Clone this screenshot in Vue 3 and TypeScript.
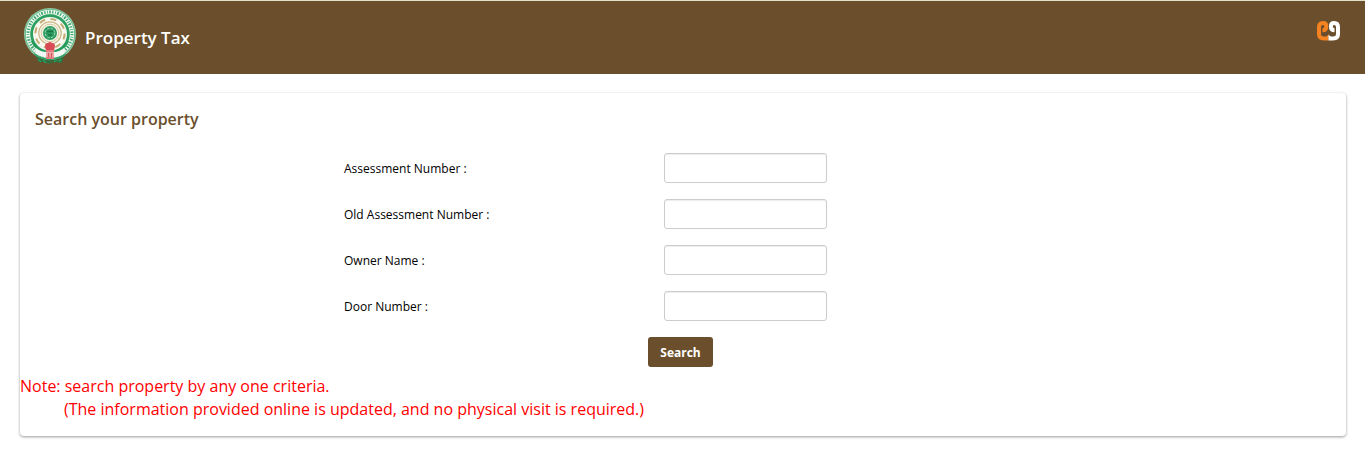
<script setup lang="ts">
import { reactive } from 'vue'

interface Field {
  id: string
  label: string
}

const fields: Field[] = [
  { id: 'assessmentNumber', label: 'Assessment Number :' },
  { id: 'oldAssessmentNumber', label: 'Old Assessment Number :' },
  { id: 'ownerName', label: 'Owner Name :' },
  { id: 'doorNumber', label: 'Door Number :' },
]

const form = reactive<Record<string, string>>({
  assessmentNumber: '',
  oldAssessmentNumber: '',
  ownerName: '',
  doorNumber: '',
})
</script>

<template>
  <div class="page">
    <header class="bar">
      <svg class="emblem" viewBox="0 0 52 56" aria-hidden="true">
        <path d="M12 49 L15 54 L20 54 L25 56 L30 54 L38 55 L40 49 Z" fill="#3a6a3c" />
        <path d="M14 51 l3 3 M19 52 l3 3 M30 54 l3 -2 M35 54 l2 -3" stroke="#1fa163" stroke-width="1.4" />
        <circle cx="26" cy="26" r="26" fill="#8fcaa6" />
        <circle cx="26" cy="26" r="24.8" fill="#4bb07a" />
        <circle cx="26" cy="26" r="22" fill="none" stroke="#eef7f0" stroke-width="4.4" />
        <circle cx="26" cy="26" r="22" fill="none" stroke="#3aa56b" stroke-width="3" stroke-dasharray="1.2 1.7 0.8 1.3 1.6 1.5" />
        <circle cx="26" cy="26" r="18.2" fill="#f3f6ec" stroke="#2b9f60" stroke-width="2.4" />
        <circle cx="26" cy="25.5" r="14.6" fill="#fbfaf2" stroke="#c2ab74" stroke-width="2" stroke-dasharray="6 5.47" />
        <circle cx="26" cy="25" r="11.2" fill="#f6f4e6" stroke="#c9b788" stroke-width="1.2" />
        <circle cx="26" cy="25" r="8.8" fill="none" stroke="#d6c9a0" stroke-width="1" />
        <circle cx="26" cy="25" r="7" fill="#2d9c62" />
        <circle cx="26" cy="25" r="4.8" fill="none" stroke="#a5d6b8" stroke-width="1" stroke-dasharray="2.4 1.4" />
        <path d="M23 23.5 h6 M24 27 h4" stroke="#177443" stroke-width="1.6" />
        <path d="M8 33 Q12 42 21 43 M44 33 Q40 42 31 43" fill="none" stroke="#249a5b" stroke-width="2.2" />
        <path d="M12 40 Q17 44 22 44 L22 49 Q16 49 11 45 Z M40 40 Q35 44 30 44 L30 49 Q36 49 41 45 Z" fill="#f2f8f3" />
        <path d="M10 46 Q17 51 25 51.5 Q35 51 42 46" fill="none" stroke="#2b9f60" stroke-width="1.4" />
        <path d="M21 38 Q21 35 24 35 Q26 33 28 35 Q31 35 31 38 L30 43 L22 43 Z" fill="#d84b55" />
        <path d="M22 42 h8 v9 h-8 Z" fill="#eda9a8" />
        <path d="M22 43 h8 M24.5 45 v4 M27.5 45 v4 M22 50 h8" stroke="#d8505a" stroke-width="1.2" />
      </svg>
      <h1 class="title">Property Tax</h1>
      <svg class="brand" viewBox="0 0 25 22" aria-label="eg" role="img">
        <g fill="none" stroke-width="4">
          <path d="M12.5 18.5 H8 Q3 18.5 3 14 V7 Q3 3 7 3 Q10.3 3 10.3 6.4 Q10.3 10.2 6.5 10.2" stroke="#f58220" />
          <path d="M12.5 18.5 H17 Q22 18.5 22 14 V7 Q22 3 18.2 3 Q14.9 3 14.9 6.4 Q14.9 10.2 18.5 10.2" stroke="#fff" />
        </g>
        <path d="M12.5 14.5 L10 17 H12.5 Z" fill="#f58220" />
        <path d="M12.5 14.5 L15 17 H12.5 Z" fill="#fff" />
      </svg>
    </header>

    <main class="card">
      <h2 class="heading">Search your property</h2>
      <form @submit.prevent>
        <div v-for="field in fields" :key="field.id" class="row">
          <label :for="field.id">{{ field.label }}</label>
          <input :id="field.id" v-model="form[field.id]" type="text" />
        </div>
        <div class="actions">
          <button type="submit">Search</button>
        </div>
      </form>
      <div class="note">
        <p>Note: search property by any one criteria.</p>
        <p class="detail">(The information provided online is updated, and no physical visit is required.)</p>
      </div>
    </main>
  </div>
</template>

<style>
body {
  margin: 0;
  background: #fff;
}
</style>

<style scoped>
.page {
  font-family: "Open Sans", "Noto Sans", sans-serif;
  font-size: 12px;
  color: #000;
}

.bar {
  display: flex;
  align-items: flex-start;
  box-sizing: border-box;
  height: 74px;
  padding: 7px 24px 0;
  border-top: 1px solid #e4dfc8;
  background: #6b4f2c;
}

.emblem {
  width: 52px;
  height: 56px;
}

.title {
  flex: 1;
  margin: 18px 0 0 9px;
  font-size: 17px;
  font-weight: 600;
  line-height: 24px;
  color: #fff;
}

.brand {
  width: 25px;
  height: 22px;
  margin-top: 12px;
}

.card {
  margin: 19px 19px 20px 20px;
  padding: 16px 0 15px;
  border-radius: 4px;
  background: #fff;
  box-shadow: 0 1px 3px rgba(0, 0, 0, 0.4);
}

.heading {
  margin: 0 0 24px 15px;
  font-size: 16px;
  font-weight: 600;
  line-height: 20px;
  color: #6b4f2c;
}

.row {
  display: grid;
  grid-template-columns: 324fr 320fr 163fr 519fr;
  align-items: center;
  margin-bottom: 16px;
}

.row label {
  grid-column: 2;
}

.row input {
  grid-column: 3;
  box-sizing: border-box;
  width: 100%;
  min-width: 0;
  height: 30px;
  padding: 4px 8px;
  border: 1px solid #ccc;
  border-radius: 3px;
  background: #fff;
  box-shadow: inset 0 1px 1px rgba(0, 0, 0, 0.075);
  font: inherit;
}

.actions {
  display: flex;
  justify-content: center;
  padding-right: 5px;
}

.actions button {
  height: 30px;
  padding: 0 12px;
  border: 0;
  border-radius: 3px;
  background: #6b4f2c;
  color: #fff;
  font-family: inherit;
  font-size: 12px;
  font-weight: 700;
}

.note {
  margin-top: 8px;
  font-size: 16px;
  line-height: 23px;
  color: #f00;
}

.note p {
  margin: 0;
}

.note .detail {
  padding-left: 44px;
}
</style>
